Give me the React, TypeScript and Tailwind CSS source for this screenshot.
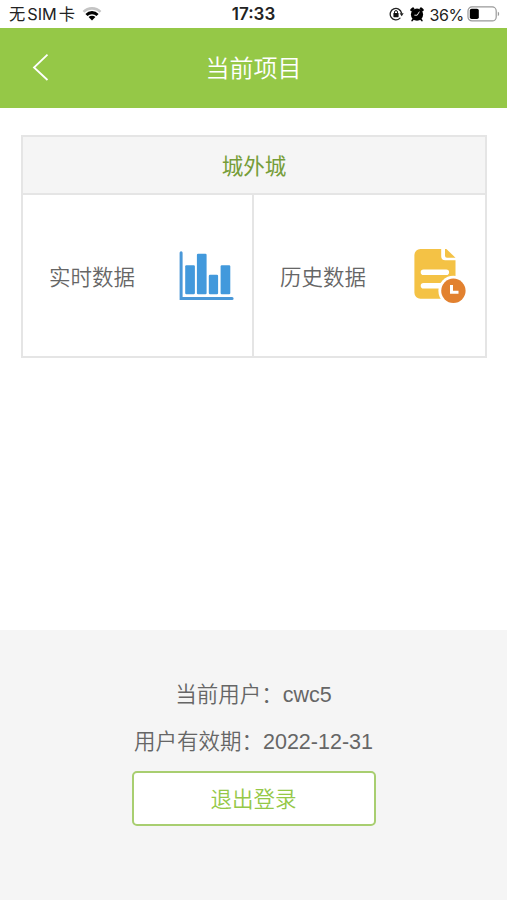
import type { ReactNode } from 'react';

const cjk = "font-['Liberation_Sans','Noto_Sans_CJK_SC',sans-serif]";

function WifiIcon() {
  return (
    <svg width="20" height="14" viewBox="0 0 20 14" fill="none">
      <path d="M0.6 3.9a13.4 13.4 0 0 1 18.8 0l-1.8 1.9a10.8 10.8 0 0 0-15.2 0z" fill="#c4c4c4" />
      <path d="M3.4 6.9a9.2 9.2 0 0 1 13.2 0l-2.1 2.2a6.4 6.4 0 0 0-9 0z" fill="#000" />
      <path d="M6.6 10.1a4.8 4.8 0 0 1 6.8 0L10 13.5z" fill="#000" />
    </svg>
  );
}

function RotationLockIcon() {
  return (
    <svg width="15" height="14" viewBox="0 0 15 14" fill="none">
      <path
        d="M11 11.1A5.7 5.7 0 1 1 12.5 6"
        stroke="#222"
        strokeWidth="1.3"
        strokeLinecap="round"
      />
      <path d="M10.6 6.2h4.1l-2 3z" fill="#222" />
      <rect x="4.4" y="6" width="5.2" height="4.2" rx="0.6" fill="#111" />
      <path d="M5.5 6.5V5.1a1.5 1.5 0 0 1 3 0v1.4" stroke="#111" strokeWidth="1" />
    </svg>
  );
}

function AlarmIcon() {
  return (
    <svg width="14" height="15" viewBox="0 0 14 15" fill="none">
      <circle cx="7" cy="7.6" r="6.1" fill="#000" />
      <path d="M1.6 3 3 1.6M12.4 3 11 1.6" stroke="#000" strokeWidth="2.6" strokeLinecap="round" />
      <path d="m3.4 12-1.3 1.6M10.6 12l1.3 1.6" stroke="#000" strokeWidth="1.6" strokeLinecap="round" />
      <path d="M9.4 4.6 7.2 8.2H4.4" stroke="#fff" strokeWidth="0.9" />
    </svg>
  );
}

function BatteryIcon() {
  return (
    <svg width="33" height="16" viewBox="0 0 33 16" fill="none">
      <rect x="1" y="0.9" width="28.2" height="14" rx="4" stroke="#999" strokeWidth="1.2" />
      <rect x="2.8" y="2.8" width="9" height="10.2" rx="1.8" fill="#000" />
      <path d="M30.8 5.7c1.8.6 1.8 3.8 0 4.4z" fill="#999" />
    </svg>
  );
}

function ChartIcon() {
  return (
    <svg width="56" height="50" viewBox="0 0 56 50" fill="#4299dc">
      <path d="M2.1 1.8v45.6h51" fill="none" stroke="#4a98d8" strokeWidth="3" strokeLinecap="round" />
      <rect x="6.2" y="14.3" width="9.7" height="29" rx="1.2" />
      <rect x="17.9" y="2.8" width="9.7" height="40.5" rx="1.2" />
      <rect x="29.8" y="23.8" width="9.3" height="19.5" rx="1.2" />
      <rect x="41.6" y="14.3" width="9.7" height="29" rx="1.2" />
    </svg>
  );
}

function HistoryIcon() {
  return (
    <svg width="54" height="56" viewBox="0 0 54 56" fill="none">
      <path
        d="M6.4 1h20.8v7.2a4 4 0 0 0 4 4h10.3v32.6a6 6 0 0 1-6 6H6.4a6 6 0 0 1-6-6V7a6 6 0 0 1 6-6z"
        fill="#f4c245"
      />
      <path d="M31 1h1.4l9.1 8.8H33a2 2 0 0 1-2-2z" fill="#f4c245" />
      <path d="M9.5 24.3h22.8M9.5 37.7h22" stroke="#fff" strokeWidth="5.6" strokeLinecap="round" />
      <circle cx="39.4" cy="42.8" r="15" fill="#fff" />
      <circle cx="39.4" cy="42.8" r="12.2" fill="#e2812f" />
      <path d="M37.5 37v7.2h7" stroke="#fff" strokeWidth="3" />
    </svg>
  );
}

function Tile({ label, children }: { label: string; children: ReactNode }) {
  return (
    <button className="flex h-full items-center justify-between pl-[26px] pr-[17px] text-[21.5px] text-[#666]">
      <span className="pt-[5px]">{label}</span>
      {children}
    </button>
  );
}

export default function App() {
  return (
    <div className={`flex h-[900px] w-full flex-col bg-white font-[350] ${cjk}`}>
      {/* Status bar */}
      <div className="grid h-7 shrink-0 grid-cols-3 items-center font-['Inter','Noto_Sans_CJK_SC',sans-serif] font-normal text-[#222]">
        <div className="flex h-7 items-center gap-[7px] pl-[9px] text-[16.3px] leading-7">
          <span className="whitespace-nowrap">
            无<span className="mx-[2px]">SIM</span>卡
          </span>
          <WifiIcon />
        </div>
        <div className="h-7 text-center text-[17px] font-semibold leading-7">17:33</div>
        <div className="flex h-7 items-center justify-end pr-[7px] text-[16px] leading-7">
          <RotationLockIcon />
          <span className="ml-[6px] mr-[5px]">
            <AlarmIcon />
          </span>
          <span className="mr-[3px] pt-px tracking-[-0.3px]">36%</span>
          <BatteryIcon />
        </div>
      </div>

      {/* Header */}
      <header className="grid h-20 shrink-0 grid-cols-[84px_1fr_84px] items-center bg-[#95c847] text-white">
        <button className="pl-8">
          <svg width="18" height="28" viewBox="0 0 18 28" fill="none" stroke="#fff" strokeWidth="1.8">
            <path d="M15.5 0.7 2 13.5l13.5 12.5" />
          </svg>
        </button>
        <h1 className="pt-[2px] text-center text-[24px]">当前项目</h1>
      </header>

      {/* Project */}
      <section className="ml-[21px] mr-5 mt-[27px] h-[223px] shrink-0 border-2 border-[#e5e5e5]">
        <h2 className="flex h-[58px] items-center justify-center border-b-2 border-[#e5e5e5] bg-[#f5f5f5] pt-[4px] text-[21.5px] font-normal text-[#769d38]">
          城外城
        </h2>
        <div className="grid h-[161px] grid-cols-2 divide-x-2 divide-[#e5e5e5]">
          <Tile label="实时数据">
            <ChartIcon />
          </Tile>
          <Tile label="历史数据">
            <HistoryIcon />
          </Tile>
        </div>
      </section>

      {/* Account */}
      <footer className="mt-auto flex h-[270px] shrink-0 flex-col items-center bg-[#f5f5f5] pt-[42px] text-[21.5px] leading-[47px] text-[#666]">
        <p>当前用户：cwc5</p>
        <p>用户有效期：2022-12-31</p>
        <button className="mt-[5px] h-[55px] w-[244px] rounded-[5px] border-2 border-[#a8ce70] bg-white pt-[3px] text-[#95c847]">
          退出登录
        </button>
      </footer>
    </div>
  );
}
